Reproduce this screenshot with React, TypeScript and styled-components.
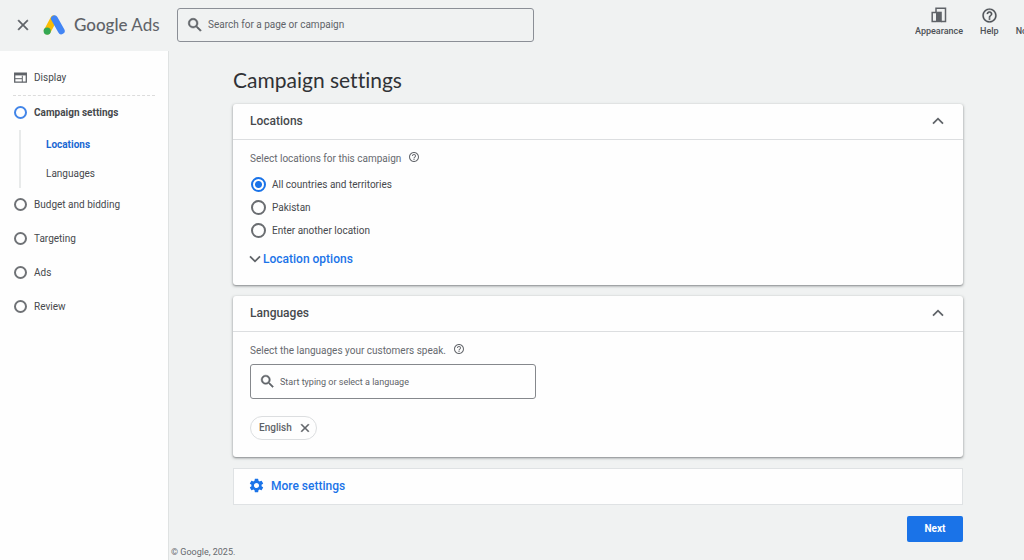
import React, { useState } from "react";
import styled, { createGlobalStyle, css } from "styled-components";
import { MdClose, MdHelpOutline, MdSearch, MdSettings } from "react-icons/md";

const GlobalStyle = createGlobalStyle`
  * { box-sizing: border-box; }
  body {
    margin: 0;
    background: #f0f2f2;
    color: #46494d;
    font: 400 10px/16px Roboto, "Liberation Sans", sans-serif;
  }
  button, input { font: inherit; color: inherit; }
  button { border: 0; padding: 0; background: none; cursor: pointer; }
  h1, h2, p, ul { margin: 0; padding: 0; }
  ul { list-style: none; }
  a { color: inherit; text-decoration: none; }
  svg { display: block; flex: none; }
  svg path[fill="none"] { stroke: none; }
`;

const display = css`
  font-family: Lato, "Liberation Sans", sans-serif;
  font-variant-ligatures: none;
`;

const Page = styled.div`
  min-height: 100vh;
  display: flex;
  flex-direction: column;
`;

const TopBar = styled.header`
  display: flex;
  align-items: center;
  height: 51px;
  padding: 0 0 2px 14px;
`;

const IconButton = styled.button`
  display: flex;
  align-items: center;
  justify-content: center;
  color: #5f6368;
`;

const Brand = styled.a`
  ${display}
  display: flex;
  align-items: center;
  gap: 8px;
  width: 134px;
  margin-left: 11px;
  font-size: 17px;
  line-height: 24px;
  color: #5f6368;
  white-space: nowrap;
`;

const BrandName = styled.span`
  b { font-weight: 500; }
`;

const SearchBox = styled.label<{ $size: "large" | "small" }>`
  display: flex;
  align-items: center;
  gap: 4px;
  width: ${(p) => (p.$size === "large" ? 357 : 286)}px;
  height: ${(p) => (p.$size === "large" ? 34 : 35)}px;
  padding: 0 8px;
  border: 1px solid ${(p) => (p.$size === "large" ? "#8b8f96" : "#85888c")};
  border-radius: 3px;
  font-size: ${(p) => (p.$size === "large" ? 10 : 9)}px;
  color: #5f6368;

  input {
    flex: 1;
    min-width: 0;
    border: 0;
    padding: 0;
    outline: 0;
    background: none;
  }
  input::placeholder { color: #5f6368; opacity: 1; }
`;

const Tools = styled.div`
  display: flex;
  align-self: flex-start;
  gap: 17px;
  width: 109px;
  margin-left: auto;
  padding-top: 7px;
  overflow: hidden;
`;

const Tool = styled.button`
  display: flex;
  flex: none;
  flex-direction: column;
  align-items: center;
  font-size: 9px;
  font-weight: 500;
  line-height: 14px;
  color: #4d5156;
`;

const ToolIcon = styled.span`
  display: flex;
  align-items: center;
  height: 17px;
  padding-bottom: 1px;
`;

const Columns = styled.div`
  display: flex;
  flex: 1;
`;

const Sidebar = styled.nav`
  flex: none;
  width: 169px;
  padding: 10px 13px 0;
  background: #fefefe;
  border-right: 1px solid #dfe2e2;
`;

const Step = styled.a<{ $bold?: boolean }>`
  display: flex;
  align-items: center;
  gap: 7px;
  height: 34px;
  padding-left: 1px;
  font-weight: ${(p) => (p.$bold ? 700 : 400)};
`;

const DashedRule = styled.div`
  border-top: 1px dashed #dcdcdc;
`;

const StepDot = styled.span<{ $current?: boolean }>`
  width: 13px;
  height: 13px;
  margin-bottom: 1px;
  border: 2px solid ${(p) => (p.$current ? "#4285e8" : "#6f7276")};
  border-radius: 50%;
`;

const SubSteps = styled.ul`
  margin-left: 6px;
  padding-left: 25px;
  border-left: 2px solid #e8eaea;
`;

const SubStep = styled.a<{ $current?: boolean }>`
  display: block;
  line-height: 29px;
  color: ${(p) => (p.$current ? "#1967d2" : "inherit")};
  font-weight: ${(p) => (p.$current ? 700 : 400)};
`;

const Main = styled.main`
  display: flex;
  flex: 1;
  flex-direction: column;
  min-width: 0;
`;

const Content = styled.div`
  display: flex;
  flex: 1;
  flex-direction: column;
  gap: 11px;
  padding: 15px 61px 0 64px;
`;

const Title = styled.h1`
  ${display}
  margin-bottom: -1px;
  font-size: 21px;
  font-weight: 400;
  line-height: 28px;
  color: #303236;
`;

const Card = styled.section`
  background: #fefefe;
  border-radius: 3px;
  box-shadow: 0 1px 2px rgba(60, 64, 67, 0.5), 0 1px 3px 1px rgba(60, 64, 67, 0.12);
`;

const CardHead = styled.header`
  display: flex;
  align-items: center;
  justify-content: space-between;
  height: 36px;
  padding: 0 19px 1px 17px;
  border-bottom: 1px solid #dcdee0;
`;

const CardTitle = styled.h2`
  font-size: 12px;
  font-weight: 500;
  line-height: 16px;
`;

const CardBody = styled.div`
  display: flex;
  flex-direction: column;
  align-items: flex-start;
  padding: 11px 17px 17px 16px;
`;

const Prompt = styled.p`
  display: flex;
  gap: 7px;
  padding-left: 1px;
  color: #66696e;
`;

const Choices = styled.div`
  display: flex;
  flex-direction: column;
  margin: 6px 0 8px 2px;
`;

const Choice = styled.label`
  display: flex;
  align-items: center;
  gap: 6px;
  height: 23px;
`;

const Radio = styled.input`
  appearance: none;
  width: 15px;
  height: 15px;
  margin: 0;
  border: 2px solid #6a6d71;
  border-radius: 50%;

  &:checked {
    border-color: #1a73e8;
    background: radial-gradient(circle, #1a73e8 3px, transparent 4px);
  }
`;

const TextLink = styled.button<{ $gap: number }>`
  display: flex;
  align-items: center;
  gap: ${(p) => p.$gap}px;
  font-size: 12px;
  font-weight: 500;
  line-height: 18px;
  color: #1a73e8;
`;

const LanguagePicker = styled.div`
  margin: 5px 0 17px 1px;
`;

const Chip = styled.span`
  display: flex;
  align-items: center;
  gap: 6px;
  height: 24px;
  margin-left: 1px;
  padding: 0 4px 0 8px;
  border: 1px solid #dcdee0;
  border-radius: 12px;
  font-weight: 500;
  color: #5f6368;
`;

const MoreSettings = styled.section`
  display: flex;
  align-items: center;
  height: 37px;
  padding: 0 14px 2px;
  background: #fefefe;
  border: 1px solid #dfe2e4;
`;

const NextButton = styled.button`
  align-self: flex-end;
  width: 56px;
  height: 26px;
  border-radius: 2px;
  background: #1a73e8;
  color: #fff;
  font-weight: 700;
`;

const Footer = styled.footer`
  padding-left: 2px;
  font-size: 9px;
  color: #66696e;
`;

const AdsLogo = () => (
  <svg width="23" height="20" viewBox="0 0 23 20" aria-hidden="true">
    <path d="M10.8 4 4.4 15.8" stroke="#fbbc04" strokeWidth="7" strokeLinecap="round" />
    <path d="m11.4 3.7 6.9 12.2" stroke="#4285f4" strokeWidth="6.8" strokeLinecap="round" />
    <circle cx="4.2" cy="16.1" r="3.6" fill="#34a853" />
  </svg>
);

const AppearanceIcon = () => (
  <svg width="16" height="16" viewBox="0 0 16 16" fill="none" stroke="#5f6368" aria-hidden="true">
    <path d="M5 5V1.2h9.5v13.3H10" strokeWidth="1.5" />
    <path d="M5 5.5H1.2v9H5" strokeWidth="1.5" />
    <path d="M5 4.7h5.8v10.5H5z" fill="#5f6368" stroke="none" />
  </svg>
);

const DisplayIcon = () => (
  <svg width="13" height="13" viewBox="0 0 13 13" fill="none" stroke="#5f6368" aria-hidden="true">
    <path d="M.7 1.2h11.6v9H.7z" strokeWidth="1.3" />
    <path d="M.7 2.2h11.6" strokeWidth="2.4" />
    <path d="M1 6.7h7M8.3 3.7v6.5" strokeWidth="1" />
  </svg>
);

const Chevron = ({ up }: { up?: boolean }) => (
  <svg width="12" height="8" viewBox="0 0 12 8" fill="none" stroke="#5f6368" strokeWidth="1.8" aria-hidden="true">
    <path d={up ? "M1 6.7 6 1.7l5 5" : "m1 1.3 5 5 5-5"} />
  </svg>
);

const places = ["All countries and territories", "Pakistan", "Enter another location"];
const nextSteps = ["Budget and bidding", "Targeting", "Ads", "Review"];

export default function App() {
  const [place, setPlace] = useState(places[0]);

  return (
    <Page>
      <GlobalStyle />
      <TopBar>
        <IconButton aria-label="Close"><MdClose size={18} strokeWidth={0.5} /></IconButton>
        <Brand href="#home">
          <AdsLogo />
          <BrandName><b>Google</b> Ads</BrandName>
        </Brand>
        <SearchBox $size="large">
          <MdSearch size={18} strokeWidth={0.7} />
          <input aria-label="Search" placeholder="Search for a page or campaign" />
        </SearchBox>
        <Tools>
          <Tool><ToolIcon><AppearanceIcon /></ToolIcon>Appearance</Tool>
          <Tool><ToolIcon><MdHelpOutline size={17} strokeWidth={0.3} /></ToolIcon>Help</Tool>
          <Tool><ToolIcon><MdHelpOutline size={17} /></ToolIcon>Notifications</Tool>
        </Tools>
      </TopBar>
      <Columns>
        <Sidebar aria-label="Campaign steps">
          <Step href="#display"><DisplayIcon />Display</Step>
          <DashedRule />
          <Step href="#settings" $bold><StepDot $current />Campaign settings</Step>
          <SubSteps>
            <li><SubStep href="#locations" $current>Locations</SubStep></li>
            <li><SubStep href="#languages">Languages</SubStep></li>
          </SubSteps>
          {nextSteps.map((name) => (
            <Step key={name} href={"#" + name.toLowerCase().replace(/ /g, "-")}><StepDot />{name}</Step>
          ))}
        </Sidebar>
        <Main>
          <Content>
            <Title>Campaign settings</Title>
            <Card id="locations">
              <CardHead>
                <CardTitle>Locations</CardTitle>
                <IconButton aria-label="Collapse locations"><Chevron up /></IconButton>
              </CardHead>
              <CardBody>
                <Prompt>Select locations for this campaign <MdHelpOutline size={12} /></Prompt>
                <Choices role="radiogroup" aria-label="Locations">
                  {places.map((name) => (
                    <Choice key={name}>
                      <Radio type="radio" name="place" checked={place === name} onChange={() => setPlace(name)} />
                      {name}
                    </Choice>
                  ))}
                </Choices>
                <TextLink $gap={2}><Chevron />Location options</TextLink>
              </CardBody>
            </Card>
            <Card id="languages">
              <CardHead>
                <CardTitle>Languages</CardTitle>
                <IconButton aria-label="Collapse languages"><Chevron up /></IconButton>
              </CardHead>
              <CardBody>
                <Prompt>Select the languages your customers speak. <MdHelpOutline size={12} /></Prompt>
                <LanguagePicker>
                  <SearchBox $size="small">
                    <MdSearch size={17} strokeWidth={0.7} />
                    <input aria-label="Languages" placeholder="Start typing or select a language" />
                  </SearchBox>
                </LanguagePicker>
                <Chip>English <IconButton aria-label="Remove English"><MdClose size={14} strokeWidth={0.8} /></IconButton></Chip>
              </CardBody>
            </Card>
            <MoreSettings>
              <TextLink $gap={6}><MdSettings size={17} />More settings</TextLink>
            </MoreSettings>
            <NextButton>Next</NextButton>
          </Content>
          <Footer>© Google, 2025.</Footer>
        </Main>
      </Columns>
    </Page>
  );
}
